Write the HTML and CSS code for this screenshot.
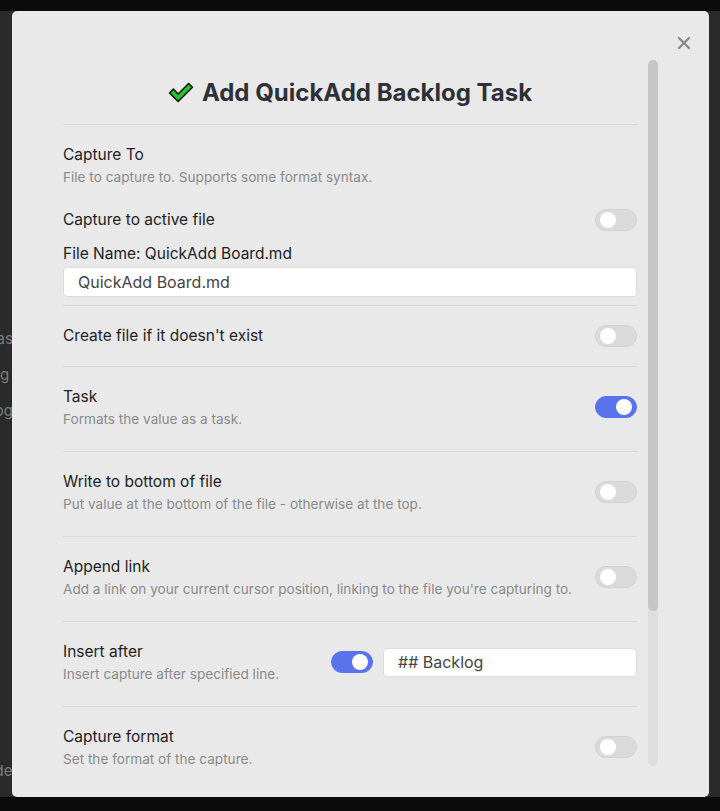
FILE: index.html
```html
<!DOCTYPE html>
<html lang="en">
<head>
<meta charset="utf-8">
<title>Add QuickAdd Backlog Task</title>
<link rel="stylesheet" href="styles.css">
</head>
<body>
<div class="topbar"></div>
<div class="app">
  <div class="bg-lines">
    <div class="bg-line l1">Task list</div>
    <div class="bg-line l2">g</div>
    <div class="bg-line l3">Backlog</div>
    <div class="bg-line l4">Inside</div>
  </div>
</div>
<div class="modal">
  <button class="close" aria-label="Close">
    <svg viewBox="0 0 14 14" width="14" height="14"><path d="M2 2 L12 12 M12 2 L2 12" stroke="#8a8a8a" stroke-width="2.4" stroke-linecap="round" fill="none"/></svg>
  </button>
  <div class="body">
    <div class="content">
      <h2 class="title">
        <svg class="check" viewBox="0 0 27 22" width="26" height="21"><polygon points="1.5,11.5 5.5,7.5 10.5,12.5 21.5,1.5 25.5,5.5 10.5,20.5" fill="#22c322" stroke="#111" stroke-width="1.6" stroke-linejoin="round"/></svg>
        <span>Add QuickAdd Backlog Task</span>
      </h2>

      <div class="setting first">
        <div class="info">
          <div class="name">Capture To</div>
          <div class="desc">File to capture to. Supports some format syntax.</div>
        </div>
      </div>
      <div class="inline-row">
        <div class="name">Capture to active file</div>
        <div class="toggle"></div>
      </div>
      <div class="name file-label">File Name: QuickAdd Board.md</div>
      <div class="input full">QuickAdd Board.md</div>

      <div class="setting single">
        <div class="info"><div class="name">Create file if it doesn't exist</div></div>
        <div class="toggle"></div>
      </div>

      <div class="setting">
        <div class="info">
          <div class="name">Task</div>
          <div class="desc">Formats the value as a task.</div>
        </div>
        <div class="toggle on"></div>
      </div>

      <div class="setting">
        <div class="info">
          <div class="name">Write to bottom of file</div>
          <div class="desc">Put value at the bottom of the file - otherwise at the top.</div>
        </div>
        <div class="toggle"></div>
      </div>

      <div class="setting">
        <div class="info">
          <div class="name">Append link</div>
          <div class="desc">Add a link on your current cursor position, linking to the file you're capturing to.</div>
        </div>
        <div class="toggle"></div>
      </div>

      <div class="setting">
        <div class="info">
          <div class="name">Insert after</div>
          <div class="desc">Insert capture after specified line.</div>
        </div>
        <div class="controls">
          <div class="toggle on"></div>
          <div class="input side">## Backlog</div>
        </div>
      </div>

      <div class="setting">
        <div class="info">
          <div class="name">Capture format</div>
          <div class="desc">Set the format of the capture.</div>
        </div>
        <div class="toggle"></div>
      </div>

      <div class="setting">
        <div class="info">
          <div class="name">Create line if not found</div>
          <div class="desc">Creates the 'insert after' line if it isn't found.</div>
        </div>
        <div class="toggle"></div>
      </div>
    </div>
    <div class="scrollbar"><div class="thumb"></div></div>
  </div>
</div>
</body>
</html>
```

FILE: styles.css
```css
* { box-sizing: border-box; }
html, body { margin: 0; padding: 0; }
body {
  background: #0b0b0b;
  width: 720px;
  height: 811px;
  overflow: hidden;
  font-family: Inter, "Noto Sans", sans-serif;
  position: relative;
}
.topbar { height: 11px; }
.app {
  height: 786px;
  background: #2a2a2a;
}
.bg-lines {
  padding-top: 310px;
  font-size: 15px;
  color: #7d7d7d;
  line-height: 36px;
}
.bg-line { white-space: nowrap; }
.l1 { text-indent: -12px; }
.l2 { text-indent: 0px; }
.l3 { text-indent: -44px; }
.l4 { margin-top: 324px; text-indent: -30px; }

.modal {
  position: absolute;
  left: 12px;
  top: 11px;
  width: 697px;
  height: 786px;
  background: #e9e9e9;
  border-radius: 5px;
  padding: 49px 51px 31px 51px;
  display: flex;
  flex-direction: column;
}
.close {
  position: absolute;
  top: 24px;
  right: 17px;
  width: 16px;
  height: 16px;
  padding: 1px;
  border: 0;
  background: transparent;
  display: flex;
  align-items: center;
  justify-content: center;
}
.body {
  flex: 1;
  display: flex;
  gap: 11px;
  min-height: 0;
}
.content {
  width: 574px;
  overflow: hidden;
}
.scrollbar {
  width: 10px;
  height: 706px;
  border-radius: 5px;
  background: #dedede;
}
.thumb {
  height: 551px;
  border-radius: 5px;
  background: #c6c6c6;
}

.title {
  margin: 16px 0;
  height: 32px;
  display: flex;
  align-items: center;
  justify-content: center;
  gap: 8px;
  font-size: 24px;
  font-weight: 700;
  color: #2e3038;
}

.setting {
  border-top: 1px solid #d9d9d9;
  padding: 18px 0 22px;
  display: flex;
  align-items: center;
  justify-content: space-between;
  gap: 10px;
}
.setting.single { padding: 18px 0 18px; }
.setting.first { padding-bottom: 21px; }
.name {
  font-size: 15.5px;
  line-height: 24px;
  color: #222222;
}
.desc {
  font-size: 13.6px;
  line-height: 20px;
  color: #8a8a8a;
}
.inline-row {
  display: flex;
  justify-content: space-between;
  align-items: center;
  height: 24px;
}
.file-label { margin-top: 10px; }
.input {
  background: #ffffff;
  border: 1px solid #dcdcdc;
  border-radius: 4px;
  font-size: 16px;
  color: #444;
  display: flex;
  align-items: center;
}
.input.full {
  height: 30px;
  margin-top: 1px;
  margin-bottom: 8px;
  padding-left: 14px;
}
.controls {
  display: flex;
  align-items: center;
  gap: 10px;
}
.input.side {
  width: 254px;
  height: 29px;
  padding-left: 14px;
}
.toggle {
  flex: none;
  width: 42px;
  height: 22px;
  border-radius: 11px;
  background: #dadada;
  border: 1px solid #d2d2d2;
  position: relative;
}
.toggle::after {
  content: "";
  position: absolute;
  top: 2px;
  left: 4px;
  width: 16px;
  height: 16px;
  border-radius: 50%;
  background: #ffffff;
}
.toggle.on {
  background: #5873eb;
  border-color: #5873eb;
}
.toggle.on::after { left: auto; right: 4px; }
```
